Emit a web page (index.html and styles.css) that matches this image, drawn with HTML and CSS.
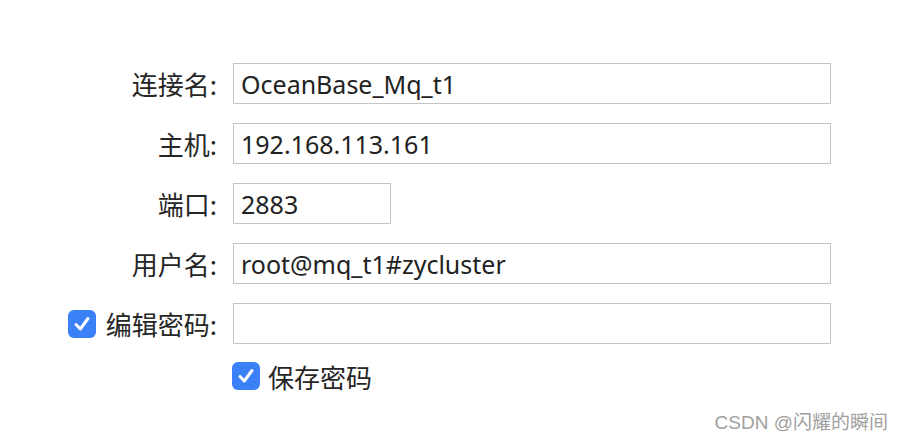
FILE: index.html
```html
<!DOCTYPE html>
<html lang="zh-CN">
<head>
<meta charset="utf-8">
<title>连接</title>
<link rel="stylesheet" href="styles.css">
</head>
<body>
<div class="page">
  <form class="form">
    <label class="label">连接名:</label>
    <div class="field"><input class="input" type="text" value="OceanBase_Mq_t1"></div>

    <label class="label">主机:</label>
    <div class="field"><input class="input" type="text" value="192.168.113.161"></div>

    <label class="label">端口:</label>
    <div class="field"><input class="input input-short" type="text" value="2883"></div>

    <label class="label">用户名:</label>
    <div class="field"><input class="input" type="text" value="root@mq_t1#zycluster"></div>

    <label class="label label-check"><span class="check"><svg viewBox="0 0 28 28" width="28" height="28"><rect x="0" y="0" width="28" height="28" rx="6" fill="#3a80f6"/><path d="M8 14.5 L12.3 19 L20 8.5" fill="none" stroke="#fff" stroke-width="3" stroke-linecap="round" stroke-linejoin="round"/></svg></span>编辑密码:</label>
    <div class="field"><input class="input" type="password" value=""></div>

    <div class="spacer"></div>
    <label class="save"><span class="check"><svg viewBox="0 0 28 28" width="28" height="28"><rect x="0" y="0" width="28" height="28" rx="6" fill="#3a80f6"/><path d="M8 14.5 L12.3 19 L20 8.5" fill="none" stroke="#fff" stroke-width="3" stroke-linecap="round" stroke-linejoin="round"/></svg></span>保存密码</label>
  </form>
  <div class="watermark">CSDN @闪耀的瞬间</div>
</div>
</body>
</html>
```
FILE: styles.css
```css
html, body {
  margin: 0;
  padding: 0;
  background: #ffffff;
}
body {
  font-family: "Noto Sans", "Noto Sans CJK SC", sans-serif;
  color: #222222;
}
.page {
  position: relative;
  width: 904px;
  height: 442px;
}
.form {
  display: grid;
  grid-template-columns: 217px 598px;
  column-gap: 16px;
  row-gap: 19px;
  grid-auto-rows: 41px;
  padding-top: 63px;
}
.label {
  display: flex;
  align-items: center;
  justify-content: flex-end;
  font-size: 26px;
  line-height: 1;
  font-family: "Noto Sans CJK SC", sans-serif;
  color: #262626;
}
.label-check {
  gap: 10px;
}
.check {
  display: inline-flex;
  width: 28px;
  height: 28px;
}
.field {
  display: flex;
}
.input {
  box-sizing: border-box;
  width: 598px;
  height: 41px;
  border: 1px solid #c4c4c4;
  border-radius: 0;
  padding: 0 0 0 7px;
  margin: 0;
  font-family: "Noto Sans", "Noto Sans CJK SC", sans-serif;
  font-size: 25px;
  color: #222222;
  background: #ffffff;
  outline: none;
}
.input-short {
  width: 158px;
}
.spacer {
  height: 28px;
}
.save {
  display: flex;
  align-items: center;
  gap: 8px;
  height: 28px;
  margin-top: -1px;
  margin-left: -1px;
  font-family: "Noto Sans CJK SC", sans-serif;
  font-size: 26px;
  color: #262626;
}
.watermark {
  position: absolute;
  right: 16px;
  bottom: 8px;
  font-family: "Liberation Sans", "Noto Sans CJK SC", sans-serif;
  font-size: 19px;
  color: #a0a0a0;
}
```
